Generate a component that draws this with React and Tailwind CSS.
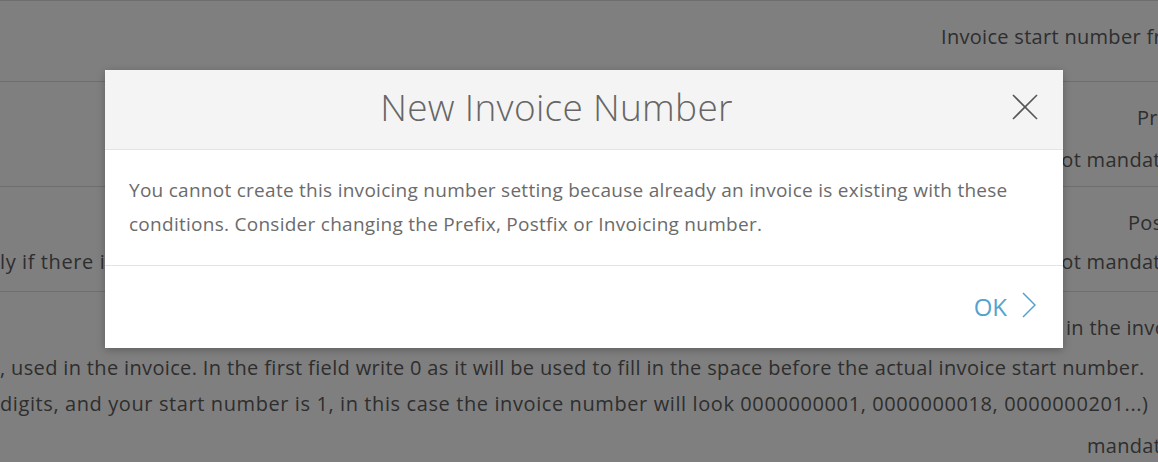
export default function App() {
  const font = { fontFamily: '"Open Sans", Lato, sans-serif' }
  return (
    <div className="relative h-[462px] w-[1158px] overflow-hidden bg-white" style={font}>
      {/* page behind the dialog */}
      <div className="text-[20px] leading-[26px] tracking-[0.3px] text-[#5c5c5c]">
        <div className="h-[82px] border-t border-b border-[#dcdcdc] pl-[941px] pt-[23px] whitespace-nowrap">
          Invoice start number from
        </div>
        <div className="h-[105px] border-b border-[#dcdcdc] whitespace-nowrap">
          <div className="pl-[1137px] pt-[23px]">Prefix</div>
          <div className="pl-[1046px] pt-[16px]">Not mandatory</div>
        </div>
        <div className="h-[105px] border-b border-[#dcdcdc] whitespace-nowrap">
          <div className="pl-[1128px] pt-[23px]">Postfix</div>
          <div className="flex pt-[13px]">
            <span className="w-[1046px] shrink-0 overflow-hidden tracking-[0.6px]">ly if there is already an invoice</span>
            <span>Not mandatory</span>
          </div>
        </div>
        <div className="whitespace-nowrap">
          <div className="pl-[1066px] pt-[23px]">in the invoice</div>
          <div className="pt-[14px] tracking-[0.35px]">, used in the invoice. In the first field write 0 as it will be used to fill in the space before the actual invoice start number.</div>
          <div className="pt-[10px] tracking-[0.6px]">digits, and your start number is 1, in this case the invoice number will look 0000000001, 0000000018, 0000000201...)</div>
          <div className="pl-[1087px] pt-[16px]">mandatory</div>
        </div>
      </div>

      {/* overlay + dialog */}
      <div className="absolute inset-0 bg-black/50 pl-[105px] pt-[70px]">
        <div className="w-[958px] bg-white shadow-[0_2px_8px_rgba(0,0,0,0.25)]">
          <div className="flex h-[80px] items-center border-b border-[#e4e4e4] bg-[#f4f4f4]">
            <h2 className="flex-1 pb-[5px] text-center text-[37px] font-light tracking-[0.3px] text-[#666666]">New Invoice Number</h2>
            <button className="flex w-[55px] justify-start pb-[6px] pl-[4px] text-[#555555]">
              <svg width="26" height="26" viewBox="0 0 26 26" fill="none" stroke="currentColor" strokeWidth="1.6">
                <line x1="1" y1="1" x2="25" y2="25" />
                <line x1="25" y1="1" x2="1" y2="25" />
              </svg>
            </button>
          </div>
          <div className="h-[116px] border-b border-[#e4e4e4] px-[24px] pt-[23px] text-[19px] leading-[34px] tracking-[0.27px] text-[#6b6b6b]">
            You cannot create this invoicing number setting because already an invoice is existing with these conditions. Consider changing the Prefix, Postfix or Invoicing number.
          </div>
          <div className="flex h-[82px] items-center justify-end pb-[4px] pr-[27px]">
            <button className="flex items-center gap-[15px] text-[24px] text-[#55a3cc]">
              <span className="pt-[4px]">OK</span>
              <svg width="14" height="26" viewBox="0 0 14 26" fill="none" stroke="currentColor" strokeWidth="1.5">
                <polyline points="1,1 13,13 1,25" />
              </svg>
            </button>
          </div>
        </div>
      </div>
    </div>
  )
}
